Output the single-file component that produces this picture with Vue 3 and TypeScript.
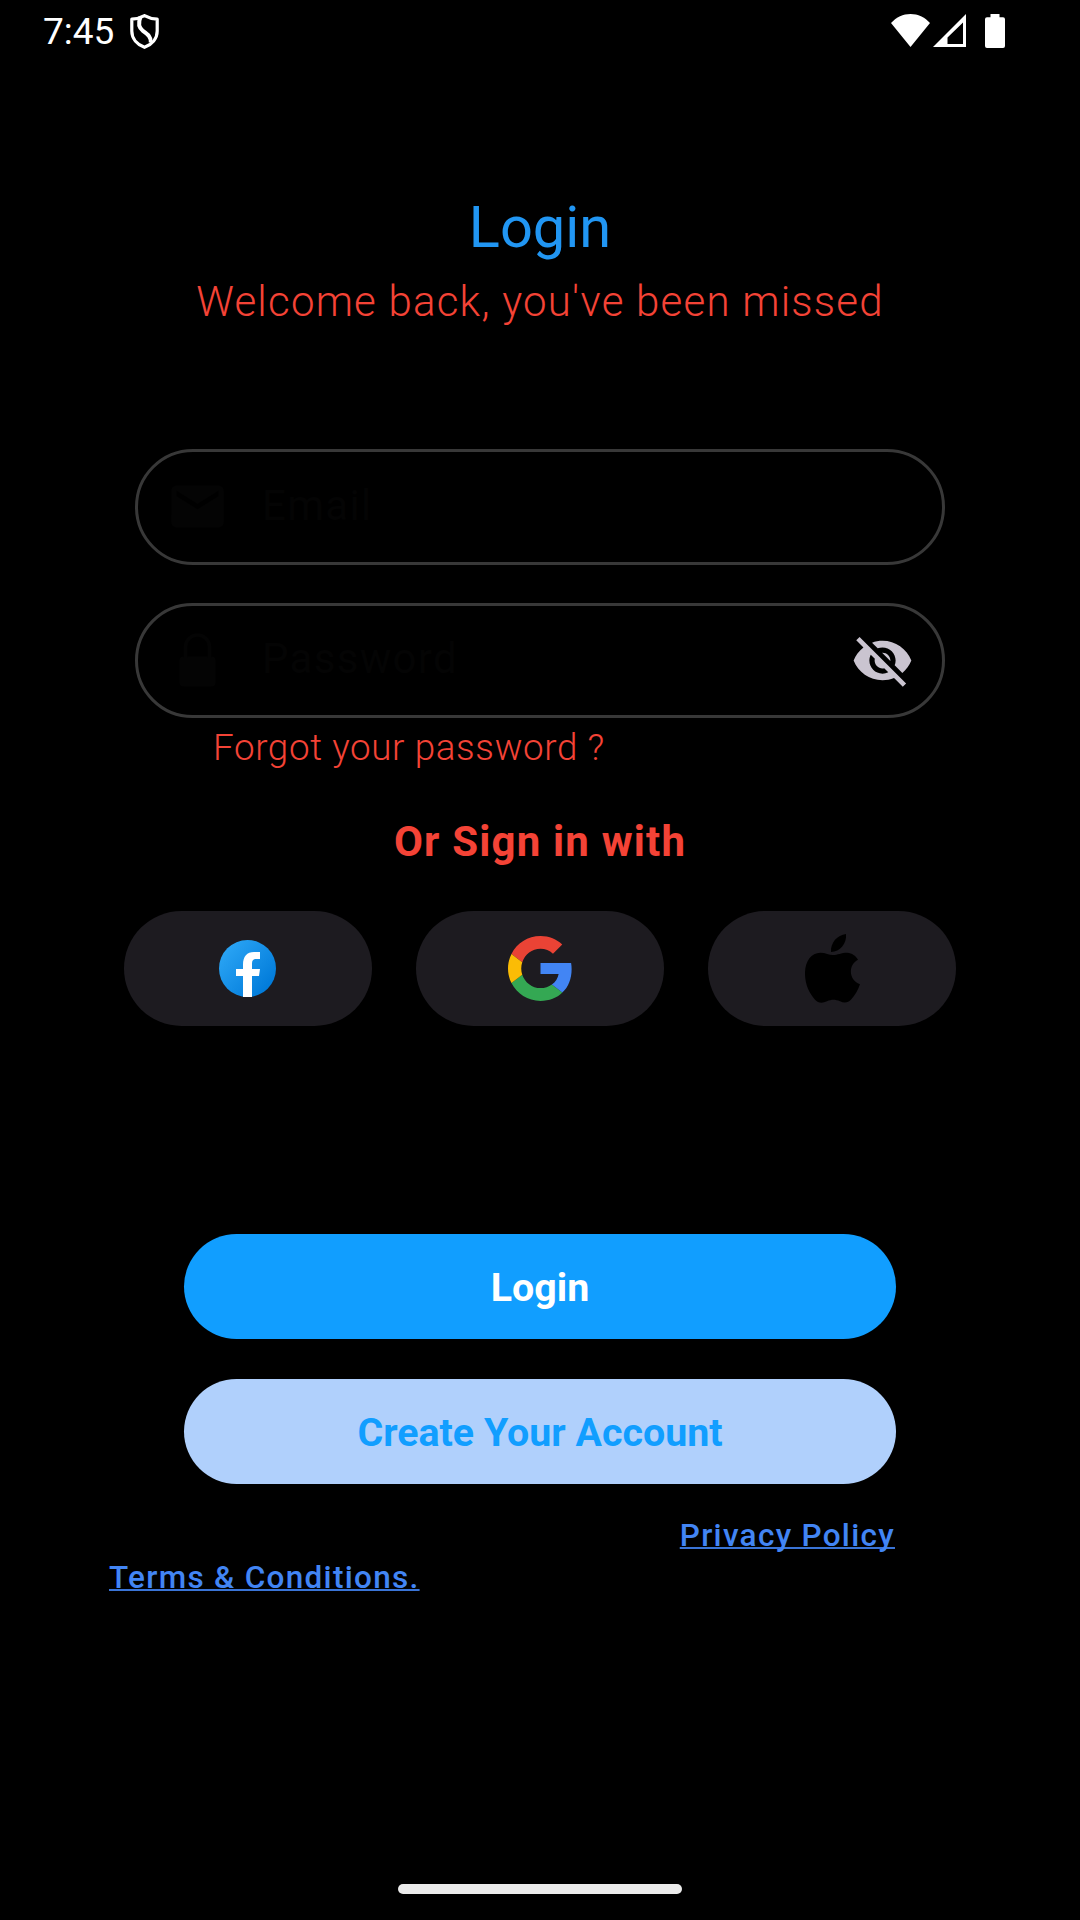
<script setup lang="ts">
interface Field {
  id: string
  label: string
  icon: 'mail' | 'lock'
  secret: boolean
}

const fields: Field[] = [
  { id: 'email', label: 'Email', icon: 'mail', secret: false },
  { id: 'password', label: 'Password', icon: 'lock', secret: true },
]

const providers: string[] = ['facebook', 'google', 'apple']
</script>

<template>
  <div class="screen">
    <header class="status">
      <span class="clock">7:45</span>
      <svg class="shield" viewBox="0 0 29 35" width="29" height="35" fill="none" stroke="#fff">
        <path d="M14.5 1.6C18.5 3.8 23 5 27.2 5.2V17C27.2 24.500 22 30.500 14.500 33.300C7 30.500 1.800 24.500 1.800 17V5.200C6 5 10.500 3.800 14.500 1.600Z" stroke-width="3.200" stroke-linejoin="round" />
        <path d="M10.500 3C8 9 8.500 13.500 13 17C18 20.500 21 22.500 20.800 28.500" stroke-width="4" />
      </svg>
      <div class="signals">
        <svg class="wifi" viewBox="0 0 39 33" width="39" height="33">
          <path d="M0 9C5.500 3 12 0 19.500 0S33.500 3 39 9L19.500 33Z" fill="#fff" />
        </svg>
        <svg class="cell" viewBox="0 0 33 33" width="33" height="33">
          <path d="M33 0V33H0ZM30 8.500L14.500 23.500V30H30Z" fill="#fff" fill-rule="evenodd" />
        </svg>
        <svg class="battery" viewBox="0 0 20 34" width="20" height="34">
          <path d="M5.500 0H14.500V3.300H18Q20 3.300 20 5.300V32Q20 34 18 34H2Q0 34 0 32V5.300Q0 3.300 2 3.300H5.500Z" fill="#fff" />
        </svg>
      </div>
    </header>

    <main class="content">
      <h1 class="title">Login</h1>
      <p class="welcome">Welcome back, you've been missed</p>

      <form class="fields">
        <label v-for="field in fields" :key="field.id" class="field">
          <svg v-if="field.icon === 'mail'" class="lead" viewBox="0 0 24 24" width="63" height="63">
            <path fill="#040404" d="M20 4H4c-1.100 0-1.990.9-1.990 2L2 18c0 1.100.9 2 2 2h16c1.100 0 2-.9 2-2V6c0-1.100-.9-2-2-2zm0 4l-8 5-8-5V6l8 5 8-5v2z" />
          </svg>
          <svg v-else class="lead" viewBox="0 0 63 63" width="63" height="63">
            <rect x="13.500" y="27.500" width="36" height="30" rx="4" fill="#040404" />
            <path d="M19.500 29V18a12 12 0 0 1 24 0V29" fill="none" stroke="#040404" stroke-width="3.700" />
          </svg>
          <span class="label">{{ field.label }}</span>
          <svg v-if="field.secret" class="eye" viewBox="0 0 24 24" width="63" height="63">
            <path fill="#cac4d0" d="M12 7c2.760 0 5 2.240 5 5 0 .65-.13 1.260-.36 1.830l2.920 2.920c1.510-1.260 2.700-2.890 3.430-4.750-1.730-4.390-6-7.500-11-7.500-1.400 0-2.740.25-3.980.7l2.160 2.160C10.740 7.130 11.350 7 12 7zM2 4.270l2.280 2.280.46.46C3.080 8.300 1.780 10.020 1 12c1.730 4.390 6 7.500 11 7.500 1.550 0 3.030-.3 4.380-.84l.42.42L19.730 22 21 20.730 3.270 3 2 4.270zM7.530 9.800l1.550 1.550c-.05.21-.08.43-.08.65 0 1.660 1.340 3 3 3 .22 0 .44-.03.65-.08l1.550 1.550c-.67.33-1.410.53-2.200.53-2.760 0-5-2.240-5-5 0-.79.2-1.530.53-2.200zm4.310-.78l3.150 3.150.02-.16c0-1.660-1.340-3-3-3l-.17.01z" />
          </svg>
        </label>
      </form>

      <a class="forgot">Forgot your password ?</a>
      <p class="divider">Or Sign in with</p>

      <div class="providers">
        <button v-for="name in providers" :key="name" class="provider" :aria-label="name">
          <svg v-if="name === 'facebook'" class="facebook" viewBox="0 0 57 57" width="57" height="57">
            <defs>
              <linearGradient id="fb" x1="0.100" y1="0.150" x2="0.900" y2="0.850">
                <stop offset="0" stop-color="#2aa4f4" />
                <stop offset="1" stop-color="#007ad9" />
              </linearGradient>
            </defs>
            <circle cx="28.500" cy="28.500" r="28.500" fill="url(#fb)" />
            <path d="M24 57V36H17V29H24V24.500C24 16.500 28 12 35 12H41V19H37C34 19 33 20.500 33 23.500V29H41L40 36H33V57Z" fill="#fff" />
          </svg>
          <svg v-else-if="name === 'google'" viewBox="0 0 48 48" width="65" height="65">
            <path fill="#ea4335" d="M24 9.500c3.540 0 6.710 1.220 9.210 3.600l6.850-6.850C35.900 2.380 30.470 0 24 0 14.620 0 6.510 5.380 2.560 13.220l7.980 6.190C12.430 13.720 17.740 9.500 24 9.500z" />
            <path fill="#34a853" d="M24 48c6.480 0 12-2.130 16.130-6.200l-7.730-6c-2.390 1.840-5.160 2.690-8.400 2.690-6.260 0-11.570-4.220-13.470-9.910l-7.980 6.190C6.510 42.620 14.620 48 24 48z" />
            <path fill="#4285f4" d="M46.980 24.550c0-1.570-.15-3.090-.38-4.550H24v8h13.400c-.6 3-2.300 6-5 7.800l7.730 6c4.510-4.180 6.850-10.360 6.850-17.250z" />
            <path fill="#fbbc05" d="M10.530 28.590c-.48-1.450-.76-2.990-.76-4.590s.27-3.140.76-4.590l-7.980-6.190C.92 16.460 0 20.120 0 24c0 3.880.92 7.540 2.560 10.780l7.970-6.190z" />
          </svg>
          <svg v-else viewBox="915 402 165 207" width="55" height="69">
            <path d="M1038 402C1041 430 1020 456 993 456C991 428 1012 405 1038 402Z" />
            <path d="M999 465C1013 465 1023 458 1042 458C1056 459 1067 467 1074 479C1045 494 1044 538 1080 553C1074 571 1065 586 1054 598C1044 609 1033 610 1020 604C1005 598 995 598 981 604C966 611 954 609 945 599C926 578 914 549 915 517C916 482 934 459 961 458C977 458 987 465 999 465Z" />
          </svg>
        </button>
      </div>

      <div class="actions">
        <button class="action primary">Login</button>
        <button class="action secondary">Create Your Account</button>
      </div>

      <footer class="legal">
        <a class="link privacy">Privacy Policy</a>
        <a class="link terms">Terms &amp; Conditions.</a>
      </footer>
    </main>

    <div class="home-bar"></div>
  </div>
</template>

<style>
body {
  margin: 0;
  background: #000;
}
</style>

<style scoped>
.screen {
  box-sizing: border-box;
  width: 1080px;
  height: 1920px;
  overflow: hidden;
  display: flex;
  flex-direction: column;
  background: #000;
  font-family: Roboto, "Liberation Sans", sans-serif;
}

h1,
p {
  margin: 0;
}

svg {
  display: block;
  flex: none;
}

.status {
  box-sizing: border-box;
  height: 63px;
  padding: 14px 75px 0 43px;
  display: flex;
  align-items: flex-start;
}

.clock {
  width: 87px;
  height: 35px;
  line-height: 35px;
  font-size: 37px;
  color: #fff;
  white-space: nowrap;
}

.signals {
  margin-left: auto;
  display: flex;
  align-items: flex-start;
}

.cell {
  margin-left: 3px;
}

.battery {
  margin-left: 19px;
}

.content {
  flex: 1;
  display: flex;
  flex-direction: column;
  align-items: center;
}

.title {
  margin-top: 126px;
  height: 76px;
  line-height: 76px;
  font-size: 57.750px;
  font-weight: 400;
  color: #2196f3;
}

.welcome {
  margin-top: 9px;
  height: 56px;
  line-height: 56px;
  font-size: 42px;
  font-weight: 300;
  letter-spacing: 1.220px;
  color: #f44336;
  white-space: nowrap;
}

.fields {
  margin-top: 119px;
  display: flex;
  flex-direction: column;
  gap: 38px;
}

.field {
  box-sizing: border-box;
  width: 810px;
  height: 115.500px;
  padding: 0 28.500px 0 27.800px;
  border: 3px solid #383838;
  border-radius: 58px;
  display: flex;
  align-items: center;
}

.label {
  margin-left: 33.200px;
  margin-bottom: 2px;
  font-size: 42px;
  line-height: 56px;
  font-weight: 400;
  letter-spacing: 1.310px;
  color: #040404;
}

.eye {
  margin-left: auto;
}

.forgot {
  align-self: flex-start;
  margin: 6px 0 0 213px;
  height: 48px;
  line-height: 48px;
  font-size: 36.750px;
  font-weight: 300;
  letter-spacing: 0.640px;
  color: #f44336;
}

.divider {
  margin-top: 42px;
  height: 56px;
  line-height: 56px;
  font-size: 42px;
  font-weight: 700;
  letter-spacing: 1.180px;
  color: #f44336;
}

.providers {
  margin-top: 41px;
  display: flex;
  gap: 44px;
}

.provider {
  width: 248px;
  height: 115px;
  padding: 0;
  border: 0;
  border-radius: 57.500px;
  background: #1d1b20;
  display: flex;
  align-items: center;
  justify-content: center;
}

.facebook {
  margin-right: 1px;
}

.actions {
  margin-top: 208px;
  display: flex;
  flex-direction: column;
  gap: 40px;
}

.action {
  width: 712px;
  height: 105px;
  padding: 2px 0 0;
  border: 0;
  border-radius: 52.500px;
  font-family: inherit;
  font-size: 39.375px;
  font-weight: 700;
}

.primary {
  background: #119eff;
  color: #fff;
}

.secondary {
  background: #b0d0fc;
  color: #119eff;
}

.legal {
  box-sizing: border-box;
  width: 100%;
  margin-top: 31px;
  padding: 0 185px 0 109px;
  display: flex;
  flex-direction: column;
}

.link {
  height: 42px;
  line-height: 42px;
  font-size: 31.500px;
  font-weight: 500;
  letter-spacing: 1.300px;
  color: #4285f4;
  text-decoration: underline;
  text-decoration-color: #3a74d6;
  text-decoration-thickness: 2px;
  text-underline-offset: 1px;
  text-decoration-skip-ink: none;
}

.privacy {
  align-self: flex-end;
}

.terms {
  align-self: flex-start;
}

.home-bar {
  align-self: center;
  width: 284px;
  height: 10px;
  margin-bottom: 26px;
  border-radius: 5px;
  background: #ebebeb;
}
</style>
